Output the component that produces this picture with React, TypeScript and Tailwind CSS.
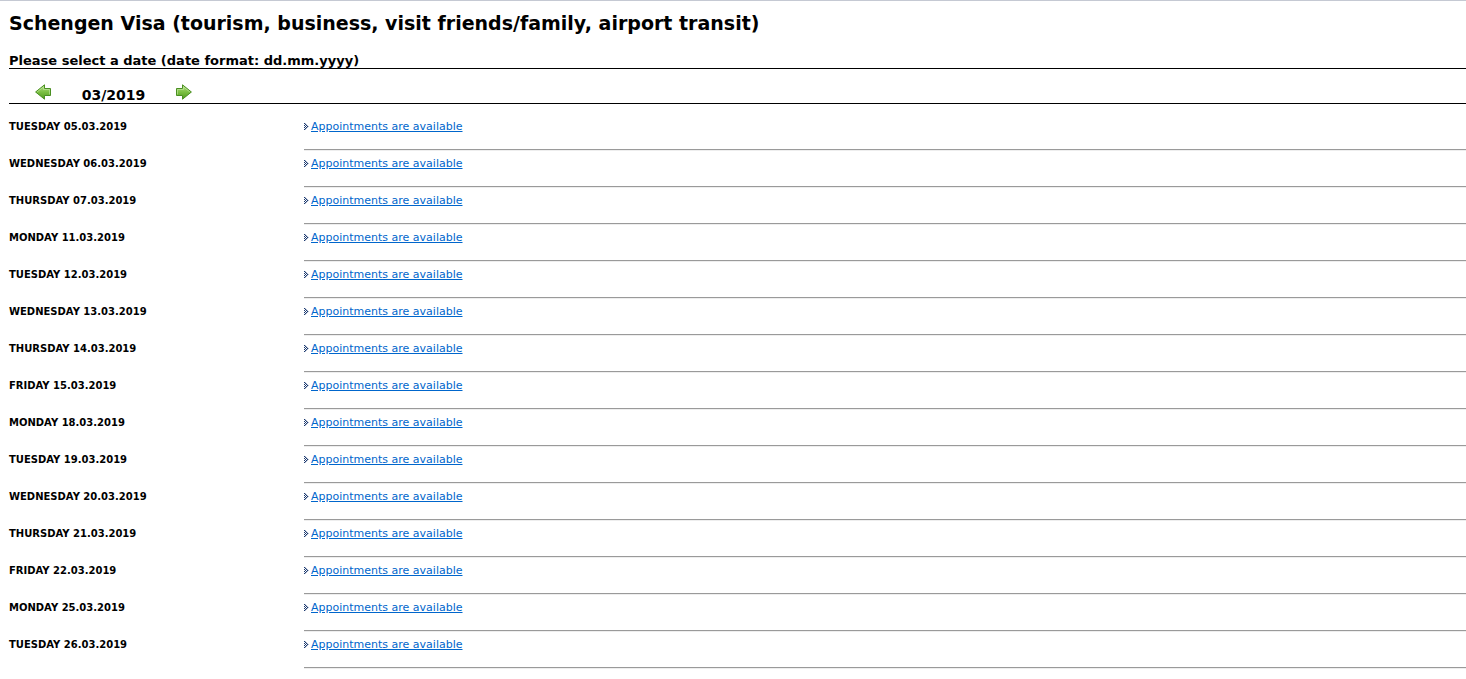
const DAYS = [
  'TUESDAY 05.03.2019',
  'WEDNESDAY 06.03.2019',
  'THURSDAY 07.03.2019',
  'MONDAY 11.03.2019',
  'TUESDAY 12.03.2019',
  'WEDNESDAY 13.03.2019',
  'THURSDAY 14.03.2019',
  'FRIDAY 15.03.2019',
  'MONDAY 18.03.2019',
  'TUESDAY 19.03.2019',
  'WEDNESDAY 20.03.2019',
  'THURSDAY 21.03.2019',
  'FRIDAY 22.03.2019',
  'MONDAY 25.03.2019',
  'TUESDAY 26.03.2019',
];

function Arrow({ id, className }: { id: string; className?: string }) {
  return (
    <svg width="16" height="16" viewBox="0 0 16 16" className={className} aria-hidden="true">
      <defs>
        <linearGradient id={id} x1="0" y1="0" x2="0" y2="1">
          <stop offset="0" stopColor="#b5e08a" />
          <stop offset="0.5" stopColor="#7cc043" />
          <stop offset="1" stopColor="#4f9a1c" />
        </linearGradient>
      </defs>
      <path d="M.5 4.5H6.5V.8L15.4 8 6.5 15.2V11.5H.5Z" fill={`url(#${id})`} stroke="#4a8f22" strokeLinejoin="round" />
      <path d="M1.5 10.5V5.5H7.5V3L14 8" fill="none" stroke="#c6e8a4" strokeOpacity="0.6" />
    </svg>
  );
}

function Marker() {
  return (
    <svg width="5" height="7" viewBox="0 0 5 7" shapeRendering="crispEdges" className="shrink-0" aria-hidden="true">
      <path d="M0 0h1v1H0zM1 1h1v1H1zM2 2h1v1H2zM3 3h1v1H3zM2 4h1v1H2zM1 5h1v1H1zM0 6h1v1H0z" fill="#1c3a70" />
      <path d="M0 2h1v1H0zM1 3h1v1H1zM0 4h1v1H0z" fill="#1c3a70" />
      <path d="M1 0h1v1H1zM2 1h1v1H2zM3 2h1v1H3zM4 3h1v1H4zM3 4h1v1H3zM2 5h1v1H2zM1 6h1v1H1z" fill="#b9c2d3" />
    </svg>
  );
}

export default function App() {
  return (
    <main className="border-t border-[#c5c9d3] bg-white pl-[9px] font-['Verdana','DejaVu_Sans',sans-serif] text-black">
      <h1 className="pt-2 text-[19px] leading-7 font-bold">
        Schengen Visa (tourism, business, visit friends/family, airport transit)
      </h1>
      <h2 className="mt-4 h-4 border-b border-black text-[13px] leading-4 font-bold">
        Please select a date (date format: dd.mm.yyyy)
      </h2>
      <nav aria-label="Month" className="flex items-end border-b border-black pt-[15px] pl-[26px] font-bold">
        <button type="button" aria-label="Previous month" className="mb-[3px]">
          <Arrow id="prev" className="-scale-x-100" />
        </button>
        <span className="w-[125px] text-center text-[14px] leading-4">03/2019</span>
        <button type="button" aria-label="Next month" className="mb-[3px]">
          <Arrow id="next" />
        </button>
      </nav>
      <table className="mt-[10px] w-full table-fixed border-collapse">
        <tbody>
          {DAYS.map((day) => (
            <tr key={day} className="align-top">
              <th scope="row" className="w-[295px] p-0 text-left text-[10px] leading-[26px] font-bold">
                {day}
              </th>
              <td className="p-0">
                <div className="flex gap-[2px] text-[11px]">
                  <span className="flex h-6 items-center">
                    <Marker />
                  </span>
                  <a href="#" className="leading-[26px] text-[#0066cc] underline">
                    Appointments are available
                  </a>
                </div>
                <hr className="mt-[9px] border-t border-b border-t-[#9a9a9a] border-b-[#eeeeee]" />
              </td>
            </tr>
          ))}
        </tbody>
      </table>
    </main>
  );
}
